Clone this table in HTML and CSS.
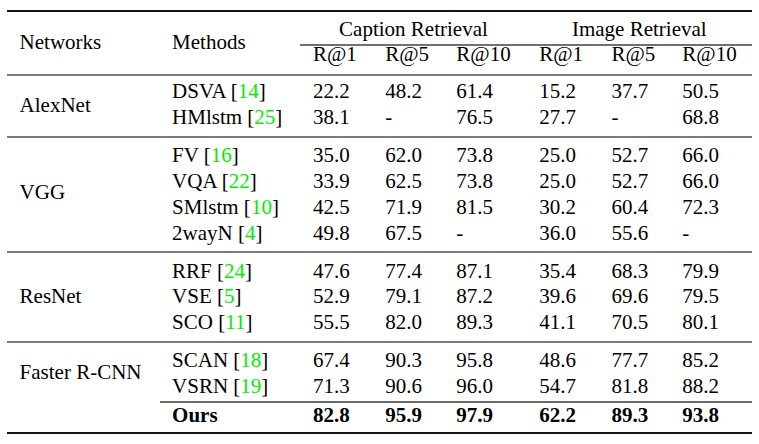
FILE: index.html
```html
<!DOCTYPE html>
<html lang="en">
<head>
<meta charset="utf-8">
<title>Retrieval results</title>
<link rel="stylesheet" href="styles.css">
</head>
<body>
<table class="results">
  <colgroup>
    <col class="c-net">
    <col class="c-method">
    <col class="c-r1">
    <col class="c-r5">
    <col class="c-r10">
    <col class="c-r1i">
    <col class="c-r5i">
    <col class="c-r10i">
  </colgroup>
  <thead>
    <tr class="hd-top">
      <th rowspan="2" class="stub">Networks</th>
      <th rowspan="2" class="stub">Methods</th>
      <th colspan="3" class="group">Caption Retrieval</th>
      <th colspan="3" class="group">Image Retrieval</th>
    </tr>
    <tr class="hd-metrics">
      <th>R@1</th><th>R@5</th><th>R@10</th>
      <th>R@1</th><th>R@5</th><th>R@10</th>
    </tr>
  </thead>
  <tbody class="grp grp-first">
    <tr>
      <td rowspan="2" class="net net-low">AlexNet</td>
      <td>DSVA [<span class="ref">14</span>]</td>
      <td>22.2</td><td>48.2</td><td>61.4</td><td>15.2</td><td>37.7</td><td>50.5</td>
    </tr>
    <tr>
      <td>HMlstm [<span class="ref">25</span>]</td>
      <td>38.1</td><td>-</td><td>76.5</td><td>27.7</td><td>-</td><td>68.8</td>
    </tr>
  </tbody>
  <tbody class="grp">
    <tr>
      <td rowspan="4" class="net net-high">VGG</td>
      <td>FV [<span class="ref">16</span>]</td>
      <td>35.0</td><td>62.0</td><td>73.8</td><td>25.0</td><td>52.7</td><td>66.0</td>
    </tr>
    <tr>
      <td>VQA [<span class="ref">22</span>]</td>
      <td>33.9</td><td>62.5</td><td>73.8</td><td>25.0</td><td>52.7</td><td>66.0</td>
    </tr>
    <tr>
      <td>SMlstm [<span class="ref">10</span>]</td>
      <td>42.5</td><td>71.9</td><td>81.5</td><td>30.2</td><td>60.4</td><td>72.3</td>
    </tr>
    <tr>
      <td>2wayN [<span class="ref">4</span>]</td>
      <td>49.8</td><td>67.5</td><td>-</td><td>36.0</td><td>55.6</td><td>-</td>
    </tr>
  </tbody>
  <tbody class="grp">
    <tr>
      <td rowspan="3" class="net">ResNet</td>
      <td>RRF [<span class="ref">24</span>]</td>
      <td>47.6</td><td>77.4</td><td>87.1</td><td>35.4</td><td>68.3</td><td>79.9</td>
    </tr>
    <tr>
      <td>VSE [<span class="ref">5</span>]</td>
      <td>52.9</td><td>79.1</td><td>87.2</td><td>39.6</td><td>69.6</td><td>79.5</td>
    </tr>
    <tr>
      <td>SCO [<span class="ref">11</span>]</td>
      <td>55.5</td><td>82.0</td><td>89.3</td><td>41.1</td><td>70.5</td><td>80.1</td>
    </tr>
  </tbody>
  <tbody class="grp grp-last">
    <tr>
      <td rowspan="2" class="net net-pair">Faster R-CNN</td>
      <td>SCAN [<span class="ref">18</span>]</td>
      <td>67.4</td><td>90.3</td><td>95.8</td><td>48.6</td><td>77.7</td><td>85.2</td>
    </tr>
    <tr class="cmid">
      <td>VSRN [<span class="ref">19</span>]</td>
      <td>71.3</td><td>90.6</td><td>96.0</td><td>54.7</td><td>81.8</td><td>88.2</td>
    </tr>
    <tr class="ours">
      <td></td>
      <td>Ours</td>
      <td>82.8</td><td>95.9</td><td>97.9</td><td>62.2</td><td>89.3</td><td>93.8</td>
    </tr>
  </tbody>
</table>
</body>
</html>
```

FILE: styles.css
```css
html, body {
  margin: 0;
  padding: 0;
  background: #ffffff;
}

body {
  font-family: "Liberation Serif", "Times New Roman", serif;
  font-size: 21px;
  color: #000000;
}

.results {
  margin: 10px 7px 0;
  width: 745px;
  table-layout: fixed;
  border-collapse: separate;
  border-spacing: 0;
  border-top: 2px solid #151515;
  border-bottom: 2px solid #151515;
}

.c-net { width: 152.5px; }
.c-method { width: 140.9px; }
.c-r1 { width: 72.2px; }
.c-r5 { width: 71.2px; }
.c-r10 { width: 82.8px; }
.c-r1i { width: 72.3px; }
.c-r5i { width: 70.9px; }
.c-r10i { width: 82.2px; }

.results th,
.results td {
  font-weight: normal;
  text-align: left;
  vertical-align: top;
  padding: 0 12.6px;
  line-height: 25.7px;
  white-space: nowrap;
}

/* header */
.results th.stub {
  vertical-align: middle;
}

.hd-top th.group {
  text-align: center;
  padding-top: 4.76px;
  padding-bottom: 1.54px;
  border-bottom: 2px solid #707070;
}

.hd-metrics th {
  line-height: 17.2px;
  padding-bottom: 10.8px;
}

/* body groups */
.grp > tr:first-child > td {
  border-top: 2px solid #7a7a7a;
  padding-top: 5.25px;
}

.grp > tr:last-child > td {
  padding-bottom: 5.25px;
}

.grp-first > tr:first-child > td {
  padding-top: 3.5px;
}

.results td.net {
  vertical-align: middle;
  padding-bottom: 5.25px;
}

.results td.net-low { padding-bottom: 3.25px; }
.results td.net-high { padding-bottom: 8.6px; }
.results td.net-pair { padding-bottom: 5px; }

.cmid > td {
  padding-bottom: 1.6px;
  border-bottom: 2px solid #6a6a6a;
}

.grp-last > tr.ours > td {
  padding-bottom: 3px;
  font-weight: bold;
}

.ref {
  color: #00ee00;
}
```
